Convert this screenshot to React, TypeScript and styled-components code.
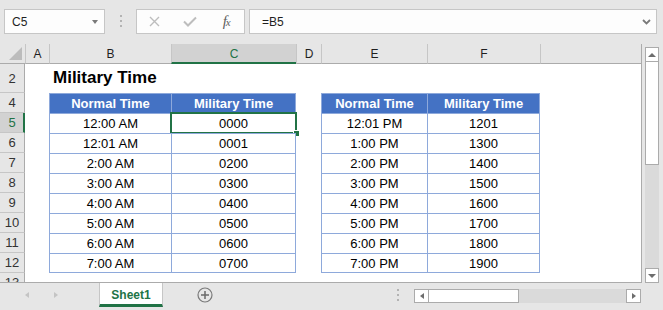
import React from "react";
import styled, { createGlobalStyle } from "styled-components";

const GREEN = "#217346";
const CHROME = "#e6e6e6";
const LINE = "#8ea9db";
const HEAD_BLUE = "#4472c4";
const COLUMNS = "25px 24px 122px 125px 25px 106px 113px 1fr";

const GlobalStyle = createGlobalStyle`
  html, body {
    margin: 0;
    padding: 0;
    background: ${CHROME};
  }
  * {
    box-sizing: border-box;
  }
`;

type Dir = "up" | "down" | "left" | "right";

const Arrow = styled.span<{ $dir: Dir; $w: number; $h: number; $color: string }>`
  width: 0;
  height: 0;
  flex-shrink: 0;
  ${({ $dir, $w, $h, $color }) => {
    const half = $w / 2;
    if ($dir === "up")
      return `border-left: ${half}px solid transparent; border-right: ${half}px solid transparent; border-bottom: ${$h}px solid ${$color};`;
    if ($dir === "down")
      return `border-left: ${half}px solid transparent; border-right: ${half}px solid transparent; border-top: ${$h}px solid ${$color};`;
    if ($dir === "left")
      return `border-top: ${$h / 2}px solid transparent; border-bottom: ${$h / 2}px solid transparent; border-right: ${$w}px solid ${$color};`;
    return `border-top: ${$h / 2}px solid transparent; border-bottom: ${$h / 2}px solid transparent; border-left: ${$w}px solid ${$color};`;
  }}
`;

const Window = styled.div`
  width: 663px;
  height: 310px;
  display: flex;
  flex-direction: column;
  background: ${CHROME};
  font-family: "Liberation Sans", Arial, sans-serif;
  color: #262626;
  overflow: hidden;
`;

/* ---------- formula bar ---------- */

const FormulaBar = styled.div`
  height: 44px;
  flex-shrink: 0;
  display: flex;
  align-items: flex-start;
  padding: 9px 6px 0 4px;
`;

const InputBox = styled.div<{ $width?: number }>`
  height: 25px;
  background: #fdfdfd;
  border: 1px solid #c6c6c6;
  display: flex;
  align-items: center;
  font-size: 12px;
  color: #1f1f1f;
  ${({ $width }) => ($width ? `width: ${$width}px;` : "flex: 1;")}
`;

const NameBox = styled(InputBox)`
  justify-content: space-between;
  padding: 0 6px 0 7px;
`;

const FxBox = styled(InputBox)`
  display: grid;
  grid-template-columns: repeat(3, 1fr);
  justify-items: center;
  margin-right: 4px;
`;

const Formula = styled(InputBox)`
  justify-content: space-between;
  padding: 0 5px 0 12px;
`;

const Dots = styled.div<{ $width: number }>`
  width: ${({ $width }) => $width}px;
  display: flex;
  flex-direction: column;
  align-items: center;
  gap: 3px;
  padding-top: 6px;
  span {
    width: 2px;
    height: 2px;
    background: #b3b3b3;
  }
`;

const Fx = styled.span`
  font-family: "Liberation Serif", "Times New Roman", serif;
  font-style: italic;
  font-size: 15px;
  color: #5f5f5f;
  letter-spacing: -1px;
  small {
    font-size: 11px;
  }
`;

/* ---------- sheet ---------- */

const Main = styled.div`
  height: 239px;
  flex-shrink: 0;
  display: flex;
`;

const Sheet = styled.div`
  width: 642px;
  height: 239px;
  display: flex;
  flex-direction: column;
  overflow: hidden;
  border-right: 1px solid #ababab;
  border-bottom: 1px solid #ababab;
`;

const GridRow = styled.div<{ $h: number }>`
  display: grid;
  grid-template-columns: ${COLUMNS};
  height: ${({ $h }) => $h}px;
  flex-shrink: 0;
`;

const Corner = styled.div`
  display: flex;
  align-items: flex-end;
  justify-content: flex-end;
  padding: 0 3px 3px 0;
  border-bottom: 1px solid #ababab;
`;

const ColHead = styled.div<{ $active?: boolean }>`
  display: flex;
  align-items: center;
  justify-content: center;
  font-size: 12px;
  border-left: 1px solid #c6c6c6;
  border-bottom: ${({ $active }) => ($active ? `2px solid ${GREEN}` : "1px solid #ababab")};
  background: ${({ $active }) => ($active ? "#d2d2d2" : CHROME)};
  color: ${({ $active }) => ($active ? GREEN : "#1f1f1f")};
  padding-top: ${({ $active }) => ($active ? "1px" : "0")};
`;

const RowHead = styled.div<{ $active?: boolean }>`
  display: flex;
  align-items: center;
  justify-content: center;
  font-size: 13px;
  background: ${({ $active }) => ($active ? "#d2d2d2" : CHROME)};
  color: ${({ $active }) => ($active ? GREEN : "#333")};
  border-bottom: 1px solid #c6c6c6;
  border-right: ${({ $active }) => ($active ? `2px solid ${GREEN}` : "1px solid #ababab")};
  padding-left: ${({ $active }) => ($active ? "1px" : "0")};
`;

const Cell = styled.div`
  background: #fff;
`;

const TitleCell = styled(Cell)`
  display: flex;
  align-items: flex-end;
  padding: 0 0 5px 4px;
  font-size: 17px;
  font-weight: 700;
  color: #000;
  white-space: nowrap;
`;

const TableCell = styled.div<{ $head?: boolean; $last?: boolean; $bottom?: boolean }>`
  position: relative;
  display: flex;
  align-items: center;
  justify-content: center;
  font-size: 13px;
  font-weight: ${({ $head }) => ($head ? 700 : 400)};
  color: ${({ $head }) => ($head ? "#fff" : "#000")};
  background: ${({ $head }) => ($head ? HEAD_BLUE : "#fff")};
  border-top: 1px solid ${LINE};
  border-left: 1px solid ${LINE};
  border-right: ${({ $last }) => ($last ? `1px solid ${LINE}` : "none")};
  border-bottom: ${({ $bottom }) => ($bottom ? `1px solid ${LINE}` : "none")};
`;

const Selection = styled.div`
  position: absolute;
  top: -2px;
  left: -2px;
  right: -2px;
  bottom: -1px;
  border: 2px solid ${GREEN};
  pointer-events: none;
`;

const FillHandle = styled.div`
  position: absolute;
  right: -5px;
  bottom: -5px;
  width: 7px;
  height: 7px;
  background: ${GREEN};
  border: 1px solid #fff;
`;

/* ---------- scroll bars ---------- */

const VScroll = styled.div`
  width: 21px;
  display: flex;
  flex-direction: column;
  padding: 3px 4px 0 3px;
`;

const ScrollButton = styled.div<{ $size: number; $vertical?: boolean }>`
  ${({ $vertical, $size }) => ($vertical ? `height: ${$size}px;` : `width: ${$size}px;`)}
  flex-shrink: 0;
  background: #fff;
  border: 1px solid #ababab;
  display: flex;
  align-items: center;
  justify-content: center;
`;

const Thumb = styled.div<{ $size: number; $vertical?: boolean }>`
  ${({ $vertical, $size }) =>
    $vertical
      ? `height: ${$size}px; margin-top: -1px;`
      : `width: ${$size}px; margin-left: -1px;`}
  flex-shrink: 0;
  background: #fff;
  border: 1px solid #ababab;
`;

const Track = styled.div`
  flex: 1;
  background: #dadada;
`;

const HScroll = styled.div`
  width: 227px;
  height: 14px;
  display: flex;
  margin: 6px 22px 0 15px;
`;

/* ---------- sheet tabs ---------- */

const TabBar = styled.div`
  height: 27px;
  flex-shrink: 0;
  display: flex;
  align-items: flex-start;
`;

const TabNav = styled.div`
  width: 99px;
  height: 24px;
  display: flex;
  align-items: center;
  padding-left: 12px;
`;

const NavButton = styled.div`
  width: 29px;
  display: flex;
  justify-content: center;
`;

const SheetTab = styled.div`
  width: 64px;
  height: 24px;
  background: #fff;
  border-left: 1px solid #c6c6c6;
  border-right: 1px solid #c6c6c6;
  border-bottom: 3px solid ${GREEN};
  display: flex;
  align-items: center;
  justify-content: center;
  padding-top: 2px;
  font-size: 12px;
  font-weight: 700;
  color: ${GREEN};
`;

const AddSheet = styled.div`
  width: 16px;
  height: 16px;
  margin: 4px 0 0 34px;
`;

const Spacer = styled.div`
  flex: 1;
`;

/* ---------- data ---------- */

const morning = [
  ["12:00 AM", "0000"],
  ["12:01 AM", "0001"],
  ["2:00 AM", "0200"],
  ["3:00 AM", "0300"],
  ["4:00 AM", "0400"],
  ["5:00 AM", "0500"],
  ["6:00 AM", "0600"],
  ["7:00 AM", "0700"],
];

const afternoon = [
  ["12:01 PM", "1201"],
  ["1:00 PM", "1300"],
  ["2:00 PM", "1400"],
  ["3:00 PM", "1500"],
  ["4:00 PM", "1600"],
  ["5:00 PM", "1700"],
  ["6:00 PM", "1800"],
  ["7:00 PM", "1900"],
];

const columns = ["A", "B", "C", "D", "E", "F", ""];

const App = () => {
  return (
    <Window>
      <GlobalStyle />
      <FormulaBar>
        <NameBox $width={101}>
          <span>C5</span>
          <Arrow $dir="down" $w={7} $h={4} $color="#7a7a7a" />
        </NameBox>
        <Dots $width={31}>
          <span />
          <span />
          <span />
        </Dots>
        <FxBox $width={109}>
          <svg width="11" height="11" viewBox="0 0 11 11">
            <path d="M1 1 L10 10 M10 1 L1 10" stroke="#bdbdbd" strokeWidth="1.4" fill="none" />
          </svg>
          <svg width="14" height="11" viewBox="0 0 14 11">
            <path d="M1 5.5 L5 9.5 L13 1.5" stroke="#bdbdbd" strokeWidth="2" fill="none" />
          </svg>
          <Fx>
            f<small>x</small>
          </Fx>
        </FxBox>
        <Formula>
          <span>=B5</span>
          <svg width="9" height="6" viewBox="0 0 9 6">
            <path d="M1 1 L4.5 4.5 L8 1" stroke="#7a7a7a" strokeWidth="1.8" fill="none" />
          </svg>
        </Formula>
      </FormulaBar>

      <Main>
        <Sheet>
          <GridRow $h={20}>
            <Corner>
              <svg width="13" height="13" viewBox="0 0 13 13">
                <polygon points="13,0 13,13 0,13" fill="#bcbcbc" />
              </svg>
            </Corner>
            {columns.map((c, i) => (
              <ColHead key={i} $active={c === "C"}>
                {c}
              </ColHead>
            ))}
          </GridRow>

          <GridRow $h={29}>
            <RowHead>2</RowHead>
            <Cell />
            <TitleCell>Military Time</TitleCell>
            <Cell />
            <Cell />
            <Cell />
            <Cell />
            <Cell />
          </GridRow>

          <GridRow $h={20}>
            <RowHead>4</RowHead>
            <Cell />
            <TableCell $head>Normal Time</TableCell>
            <TableCell $head $last>
              Military Time
            </TableCell>
            <Cell />
            <TableCell $head>Normal Time</TableCell>
            <TableCell $head $last>
              Military Time
            </TableCell>
            <Cell />
          </GridRow>

          {morning.map(([normal, military], i) => {
            const bottom = i === morning.length - 1;
            const selected = i === 0;
            return (
              <GridRow key={normal} $h={20}>
                <RowHead $active={selected}>{i + 5}</RowHead>
                <Cell />
                <TableCell $bottom={bottom}>{normal}</TableCell>
                <TableCell $last $bottom={bottom}>
                  {military}
                  {selected && (
                    <Selection>
                      <FillHandle />
                    </Selection>
                  )}
                </TableCell>
                <Cell />
                <TableCell $bottom={bottom}>{afternoon[i][0]}</TableCell>
                <TableCell $last $bottom={bottom}>
                  {afternoon[i][1]}
                </TableCell>
                <Cell />
              </GridRow>
            );
          })}

          <GridRow $h={20}>
            <RowHead>13</RowHead>
            <Cell />
            <Cell />
            <Cell />
            <Cell />
            <Cell />
            <Cell />
            <Cell />
          </GridRow>
        </Sheet>

        <VScroll>
          <ScrollButton $vertical $size={15}>
            <Arrow $dir="up" $w={8} $h={4} $color="#6d6d6d" />
          </ScrollButton>
          <Thumb $vertical $size={104} />
          <Track />
          <ScrollButton $vertical $size={15}>
            <Arrow $dir="down" $w={8} $h={4} $color="#6d6d6d" />
          </ScrollButton>
        </VScroll>
      </Main>

      <TabBar>
        <TabNav>
          <NavButton>
            <Arrow $dir="left" $w={4} $h={7} $color="#c4c4c4" />
          </NavButton>
          <NavButton>
            <Arrow $dir="right" $w={4} $h={7} $color="#c4c4c4" />
          </NavButton>
        </TabNav>
        <SheetTab>Sheet1</SheetTab>
        <AddSheet>
          <svg width="16" height="16" viewBox="0 0 16 16">
            <circle cx="8" cy="8" r="7" stroke="#7a7a7a" strokeWidth="1.2" fill="none" />
            <path d="M8 4 V12 M4 8 H12" stroke="#6a6a6a" strokeWidth="1.5" />
          </svg>
        </AddSheet>
        <Spacer />
        <Dots $width={2}>
          <span />
          <span />
          <span />
        </Dots>
        <HScroll>
          <ScrollButton $size={15}>
            <Arrow $dir="left" $w={4} $h={7} $color="#6d6d6d" />
          </ScrollButton>
          <Thumb $size={91} />
          <Track />
          <ScrollButton $size={15}>
            <Arrow $dir="right" $w={4} $h={7} $color="#6d6d6d" />
          </ScrollButton>
        </HScroll>
      </TabBar>
    </Window>
  );
};

export default App;
